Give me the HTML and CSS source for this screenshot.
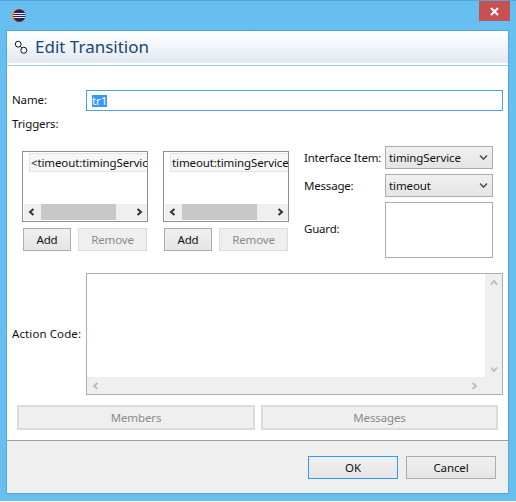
FILE: index.html
```html
<!DOCTYPE html>
<html lang="en">
<head>
<meta charset="utf-8">
<title>Edit Transition</title>
<link rel="stylesheet" href="styles.css">
</head>
<body>
<div class="frame">
  <div class="titlebar">
    <svg class="app-icon" width="16" height="16" viewBox="0 0 16 16">
      <circle cx="7.5" cy="7.5" r="6.8" fill="#f7941e"/>
      <circle cx="8.3" cy="7.5" r="6.3" fill="#2c2255"/>
      <path d="M2.5 5.5h11.6M2 7.5h12.6M2.5 9.5h11.6" stroke="#e6e6f5" stroke-width="1.1"/>
    </svg>
    <div class="close">
      <svg width="9" height="9" viewBox="0 0 9 9"><path d="M1 1l7 7M8 1l-7 7" stroke="#fff" stroke-width="2"/></svg>
    </div>
  </div>
  <div class="dialog">
    <div class="header">
      <svg class="header-icon" width="16" height="16" viewBox="0 0 16 16">
        <path d="M5 5l5 5" stroke="#111" stroke-width="1"/>
        <circle cx="4.2" cy="4.2" r="2.9" fill="#fff" stroke="#111" stroke-width="1"/>
        <circle cx="9.8" cy="10.3" r="3" fill="#fff" stroke="#111" stroke-width="1"/>
      </svg>
      <span class="title">Edit Transition</span>
    </div>
    <div class="content">
      <div class="name-row">
        <label class="field-label">Name:</label>
        <div class="name-input"><span class="selected-text">tr1</span></div>
      </div>
      <div class="triggers-label">Triggers:</div>
      <div class="triggers">
        <div class="list-col">
          <div class="list">
            <div class="list-item">&lt;timeout:timingService</div>
            <div class="hscroll">
              <svg class="arrow" width="8" height="8" viewBox="0 0 8 8"><path d="M5.5 1L2 4l3.5 3" fill="none" stroke="#333" stroke-width="2"/></svg>
              <div class="track"><div class="thumb"></div></div>
              <svg class="arrow" width="8" height="8" viewBox="0 0 8 8"><path d="M2.5 1L6 4 2.5 7" fill="none" stroke="#333" stroke-width="2"/></svg>
            </div>
          </div>
          <div class="list-buttons">
            <button class="btn btn-add">Add</button>
            <button class="btn btn-remove" disabled>Remove</button>
          </div>
        </div>
        <div class="list-col">
          <div class="list">
            <div class="list-item">timeout:timingService</div>
            <div class="hscroll">
              <svg class="arrow" width="8" height="8" viewBox="0 0 8 8"><path d="M5.5 1L2 4l3.5 3" fill="none" stroke="#333" stroke-width="2"/></svg>
              <div class="track"><div class="thumb"></div></div>
              <svg class="arrow" width="8" height="8" viewBox="0 0 8 8"><path d="M2.5 1L6 4 2.5 7" fill="none" stroke="#333" stroke-width="2"/></svg>
            </div>
          </div>
          <div class="list-buttons">
            <button class="btn btn-add">Add</button>
            <button class="btn btn-remove" disabled>Remove</button>
          </div>
        </div>
        <div class="side-form">
          <div class="side-row">
            <label class="side-label">Interface Item:</label>
            <div class="combo"><span>timingService</span>
              <svg width="9" height="7" viewBox="0 0 9 7"><path d="M1 1.5l3.5 3.5L8 1.5" fill="none" stroke="#555" stroke-width="1.6"/></svg>
            </div>
          </div>
          <div class="side-row">
            <label class="side-label">Message:</label>
            <div class="combo"><span>timeout</span>
              <svg width="9" height="7" viewBox="0 0 9 7"><path d="M1 1.5l3.5 3.5L8 1.5" fill="none" stroke="#555" stroke-width="1.6"/></svg>
            </div>
          </div>
          <div class="side-row">
            <label class="side-label guard-label">Guard:</label>
            <div class="guard"></div>
          </div>
        </div>
      </div>
      <div class="action-row">
        <label class="field-label action-label">Action Code:</label>
        <div class="action-box">
          <div class="action-main">
            <div class="action-text"></div>
            <div class="vscroll">
              <svg width="8" height="8" viewBox="0 0 8 8"><path d="M1 5.5L4 2l3 3.5" fill="none" stroke="#bbb" stroke-width="1.8"/></svg>
              <svg width="8" height="8" viewBox="0 0 8 8"><path d="M1 2.5L4 6l3-3.5" fill="none" stroke="#bbb" stroke-width="1.8"/></svg>
            </div>
          </div>
          <div class="action-hscroll">
            <svg width="8" height="8" viewBox="0 0 8 8"><path d="M5.5 1L2 4l3.5 3" fill="none" stroke="#bbb" stroke-width="1.8"/></svg>
            <svg width="8" height="8" viewBox="0 0 8 8"><path d="M2.5 1L6 4 2.5 7" fill="none" stroke="#bbb" stroke-width="1.8"/></svg>
          </div>
        </div>
      </div>
      <div class="wide-buttons">
        <button class="btn btn-wide" disabled>Members</button>
        <button class="btn btn-wide" disabled>Messages</button>
      </div>
    </div>
    <div class="footer">
      <button class="btn btn-footer btn-default">OK</button>
      <button class="btn btn-footer">Cancel</button>
    </div>
  </div>
</div>
</body>
</html>
```
FILE: styles.css
```css
* { box-sizing: border-box; }
html, body { margin: 0; padding: 0; }
body {
  width: 516px;
  height: 502px;
  background: #fff;
  font-family: "Noto Sans", "Open Sans", sans-serif;
  font-size: 11.5px;
  letter-spacing: -0.12px;
  color: #111;
  overflow: hidden;
}
.frame {
  height: 501px;
  background: #66bef1;
  border-top: 1px solid #5aa6d3;
  padding: 0 7px 7px 6px;
  display: flex;
  flex-direction: column;
}
.titlebar {
  height: 29px;
  display: flex;
  align-items: flex-start;
  flex: none;
}
.app-icon { margin: 7px 0 0 5px; }
.close {
  margin-left: auto;
  margin-right: -1px;
  width: 31px;
  height: 20px;
  background: #c75050;
  display: flex;
  align-items: center;
  justify-content: center;
}
.dialog {
  flex: 1;
  border: 1px solid #5aa6d3;
  background: #fff;
  display: flex;
  flex-direction: column;
}
.header {
  height: 34px;
  flex: none;
  display: flex;
  align-items: center;
  padding-left: 7px;
  background: linear-gradient(#fff, #e3e9f2);
  border-bottom: 2px solid #fff;
  box-shadow: 0 1px 0 #a3d0ec;
}
.header-icon { margin-top: 2px; }
.title {
  margin-left: 5px;
  font-size: 17px;
  letter-spacing: 0;
  line-height: 20px;
  color: #174676;
}
.content {
  flex: 1;
  padding: 25px 5px 0 5px;
}
.name-row {
  display: flex;
  align-items: center;
}
.field-label {
  width: 74px;
  flex: none;
  white-space: nowrap;
  padding-bottom: 2px;
}
.action-label { letter-spacing: 0.1px; }
.name-input {
  flex: 1;
  height: 21px;
  border: 1px solid #4f9fe6;
  padding: 4px 0 0 5px;
  line-height: 12px;
}
.selected-text { background: #3399ff; color: #fff; display: inline-block; }
.triggers-label { margin-top: 4px; line-height: 17px; }
.triggers {
  display: flex;
  margin-top: 11px;
}
.list-col { width: 126px; margin-left: 10px; margin-top: 8px; }
.list-col + .list-col { margin-left: 15px; }
.list {
  height: 71px;
  border: 1px solid #8e8e99;
  padding: 1px 0 1px 1px;
  position: relative;
  display: flex;
  flex-direction: column;
  justify-content: space-between;
  overflow: hidden;
}
.list-item {
  margin-left: 5px;
  height: 19px;
  border: 1px solid #e4e4e4;
  border-right: 0;
  background: #f6f6f6;
  padding-left: 1px;
  line-height: 17px;
  white-space: nowrap;
  overflow: hidden;
}
.hscroll {
  height: 16px;
  background: #efefef;
  display: flex;
  align-items: center;
}
.arrow { flex: none; margin: 0 4px; }
.hscroll .arrow:first-child { margin: 0 5px 0 4px; }
.track { flex: 1; height: 100%; }
.thumb { width: 75px; height: 100%; background: #c8c8c8; }
.list-buttons {
  display: flex;
  gap: 7px;
  margin-top: 6px;
  padding-left: 1px;
}
.btn {
  font-family: inherit;
  font-size: 11.5px;
  letter-spacing: -0.12px;
  padding: 0;
  border: 1px solid #acacac;
  background: linear-gradient(#f0f0f0, #e5e5e5);
  color: #111;
  line-height: 16px;
}
.btn[disabled] {
  background: #efefef;
  border-color: #dcdcdc;
  color: #8a8a8a;
}
.btn-add { width: 48px; height: 23px; }
.btn-remove { width: 69px; height: 23px; }
.side-form {
  margin-left: 15px;
  margin-top: 3px;
  width: 189px;
  display: flex;
  flex-direction: column;
  gap: 5px;
}
.side-row {
  display: flex;
  align-items: center;
}
.side-label { width: 81px; flex: none; white-space: nowrap; letter-spacing: -0.2px; }
.guard-label { padding-bottom: 3px; }
.combo {
  width: 108px;
  height: 23px;
  border: 1px solid #acacac;
  background: linear-gradient(#f0f0f0, #e5e5e5);
  display: flex;
  align-items: center;
  justify-content: space-between;
  padding: 0 4px 0 3px;
}
.guard {
  width: 108px;
  height: 56px;
  border: 1px solid #acacac;
  background: #fff;
}
.action-row {
  display: flex;
  align-items: center;
  margin-top: 15px;
}
.action-box {
  flex: 1;
  height: 122px;
  border: 1px solid #acacb4;
  display: flex;
  flex-direction: column;
}
.action-main { flex: 1; display: flex; }
.action-text { flex: 1; }
.vscroll {
  width: 17px;
  background: #efefef;
  display: flex;
  flex-direction: column;
  justify-content: space-between;
  align-items: center;
  padding: 5px 0 4px;
}
.action-hscroll {
  height: 17px;
  background: #efefef;
  display: flex;
  justify-content: space-between;
  align-items: center;
  padding: 0 24px 0 5px;
}
.wide-buttons {
  display: grid;
  grid-template-columns: 238px 1fr;
  gap: 6px;
  margin: 10px 5px 0 5px;
}
.btn-wide {
  height: 25px;
  border-width: 2px;
  border-color: #e0e0e0;
}
.footer {
  height: 53px;
  flex: none;
  border-top: 1px solid #a0a0a0;
  background: #efefef;
  display: flex;
  justify-content: flex-end;
  align-items: flex-start;
  gap: 8px;
  padding: 15px 12px 0 0;
}
.btn-footer { width: 90px; height: 23px; }
.btn-default { border-color: #3399ff; }
```
